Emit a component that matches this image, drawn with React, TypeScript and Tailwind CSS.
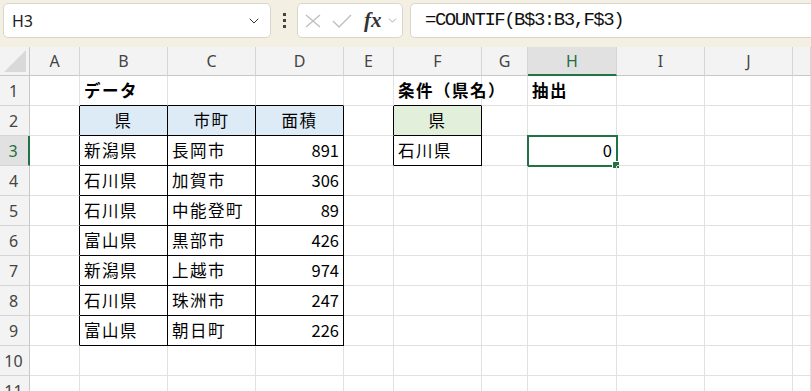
import { ChevronDown } from "lucide-react";

type Cell = { text: string; bold?: boolean; align?: "left" | "center" | "right"; bg?: string };

const cols = ["A", "B", "C", "D", "E", "F", "G", "H", "I", "J", ""];

const data: [string, string, string][] = [
  ["新潟県", "長岡市", "891"],
  ["石川県", "加賀市", "306"],
  ["石川県", "中能登町", "89"],
  ["富山県", "黒部市", "426"],
  ["新潟県", "上越市", "974"],
  ["石川県", "珠洲市", "247"],
  ["富山県", "朝日町", "226"],
];

// sheet contents keyed by "row:colIndex" (0 = A)
const cells: Record<string, Cell> = {
  "1:1": { text: "データ", bold: true },
  "1:5": { text: "条件（県名）", bold: true },
  "1:7": { text: "抽出", bold: true },
  "2:1": { text: "県", align: "center", bg: "blue" },
  "2:2": { text: "市町", align: "center", bg: "blue" },
  "2:3": { text: "面積", align: "center", bg: "blue" },
  "2:5": { text: "県", align: "center", bg: "green" },
  "3:5": { text: "石川県" },
  "3:7": { text: "0", align: "right" },
};
data.forEach((d, i) => {
  cells[`${i + 3}:1`] = { text: d[0] };
  cells[`${i + 3}:2`] = { text: d[1] };
  cells[`${i + 3}:3`] = { text: d[2], align: "right" };
});

const inTable = (r: number, c: number) =>
  (r >= 2 && r <= 9 && c >= 1 && c <= 3) || (r >= 2 && r <= 3 && c === 5);

const gridCols =
  "grid grid-cols-[30px_50px_88px_88px_88px_50px_88px_46px_89px_88px_88px_1fr]";

const SheetCell = ({ r, c }: { r: number; c: number }) => {
  const cell = cells[`${r}:${c}`];
  const right = inTable(r, c) || inTable(r, c + 1);
  const bottom = inTable(r, c) || inTable(r + 1, c);
  const active = r === 3 && c === 7;
  return (
    <div
      className={`relative flex items-center border-r border-b px-[4px] text-[16.5px] tracking-[1.5px] text-black whitespace-nowrap
        ${right ? "border-r-black" : "border-r-[#e1e1e1]"}
        ${bottom ? "border-b-black" : "border-b-[#e1e1e1]"}
        ${cell?.bg === "blue" ? "bg-[#ddebf7]" : ""}
        ${cell?.bg === "green" ? "bg-[#e2efda]" : ""}
        ${cell?.align === "center" ? "justify-center" : ""}
        ${cell?.align === "right" ? "justify-end tracking-normal" : ""}
        ${cell?.bold ? "font-bold" : ""}`}
    >
      {cell?.text}
      {active && (
        <div className="absolute -left-[1px] -top-[1px] -right-[2px] -bottom-[2px] border-2 border-[#217346]">
          <div className="absolute -right-[3px] -bottom-[3px] h-[6px] w-[6px] bg-[#217346] outline outline-1 outline-white" />
        </div>
      )}
    </div>
  );
};

const App = () => {
  const rows = Array.from({ length: 11 }, (_, i) => i + 1);
  return (
    <div className="h-[391px] w-[811px] overflow-hidden bg-white font-['Noto_Sans_CJK_JP',sans-serif]">
      {/* formula bar */}
      <div className="flex h-[47px] items-start bg-[#f3f0e3] pl-[3px] pt-[3px]">
        <div className="flex h-[35px] w-[268px] items-center justify-between rounded-[5px] border border-[#d9d6cb] bg-white pl-[8px] pr-[8px]">
          <span className="font-['Noto_Sans',sans-serif] text-[16px] text-[#222]">H3</span>
          <ChevronDown size={16} strokeWidth={1.5} className="text-[#333]" />
        </div>
        <div className="ml-[12px] mr-[11px] flex h-[35px] flex-col items-center justify-center gap-[3px]">
          <div className="h-[3px] w-[3px] bg-[#444]" />
          <div className="h-[3px] w-[3px] bg-[#444]" />
          <div className="h-[3px] w-[3px] bg-[#444]" />
        </div>
        <div className="flex h-[35px] w-[106px] items-center rounded-[5px] border border-[#d9d6cb] bg-white pl-[7px]">
          <svg width="16" height="14" viewBox="0 0 16 14" className="text-[#bdbdbd]">
            <path d="M1 1 L15 13 M15 1 L1 13" stroke="currentColor" strokeWidth="1.3" fill="none" />
          </svg>
          <svg width="20" height="14" viewBox="0 0 20 14" className="ml-[11px] text-[#bdbdbd]">
            <path d="M1 7 L7 13 L19 1" stroke="currentColor" strokeWidth="1.3" fill="none" />
          </svg>
          <span className="ml-[12px] font-['Liberation_Serif',serif] text-[21px] font-bold italic leading-none text-[#333]">
            fx
          </span>
          <ChevronDown size={13} strokeWidth={1.5} className="ml-[4px] text-[#999]" />
        </div>
        <div className="ml-[7px] flex h-[35px] flex-1 items-center rounded-l-[5px] border border-r-0 border-[#d9d6cb] bg-white pl-[14px]">
          <span className="font-['Liberation_Mono',monospace] text-[19px] tracking-[-1.5px] text-[#111]">
            =COUNTIF(B$3:B3,F$3)
          </span>
        </div>
      </div>

      {/* column headers */}
      <div className={`${gridCols} h-[29px] bg-[#f3f3f3]`}>
        <div className="relative border-r border-b border-[#c8c8c8]">
          <svg width="22" height="22" viewBox="0 0 22 22" className="absolute right-[3px] bottom-[3px]">
            <path d="M22 0 L22 22 L0 22 Z" fill="#d9d9d9" />
          </svg>
        </div>
        {cols.map((l, i) => (
          <div
            key={i}
            className={`flex items-center justify-center border-r text-[16px] font-['Noto_Sans',sans-serif]
              ${l === "H" ? "border-b-2 border-b-[#217346] bg-[#e1e1e1] text-[#1e6e42] border-r-[#d5d5d5]" : "border-b border-b-[#c8c8c8] text-[#444] border-r-[#d5d5d5]"}`}
          >
            {l}
          </div>
        ))}
      </div>

      {/* sheet */}
      <div className={`${gridCols} auto-rows-[30px]`}>
        {rows.map((r) => [
          <div
            key={`h${r}`}
            className={`flex items-center justify-center border-b border-b-[#d5d5d5] pr-[2px] font-['Noto_Sans',sans-serif] text-[16px]
              ${r === 3 ? "border-r-2 border-r-[#217346] bg-[#e1e1e1] text-[#1e6e42]" : "border-r border-r-[#c8c8c8] bg-[#f3f3f3] text-[#444]"}`}
          >
            {r}
          </div>,
          ...cols.map((_, c) => <SheetCell key={`${r}:${c}`} r={r} c={c} />),
        ])}
      </div>
    </div>
  );
};

export default App;
